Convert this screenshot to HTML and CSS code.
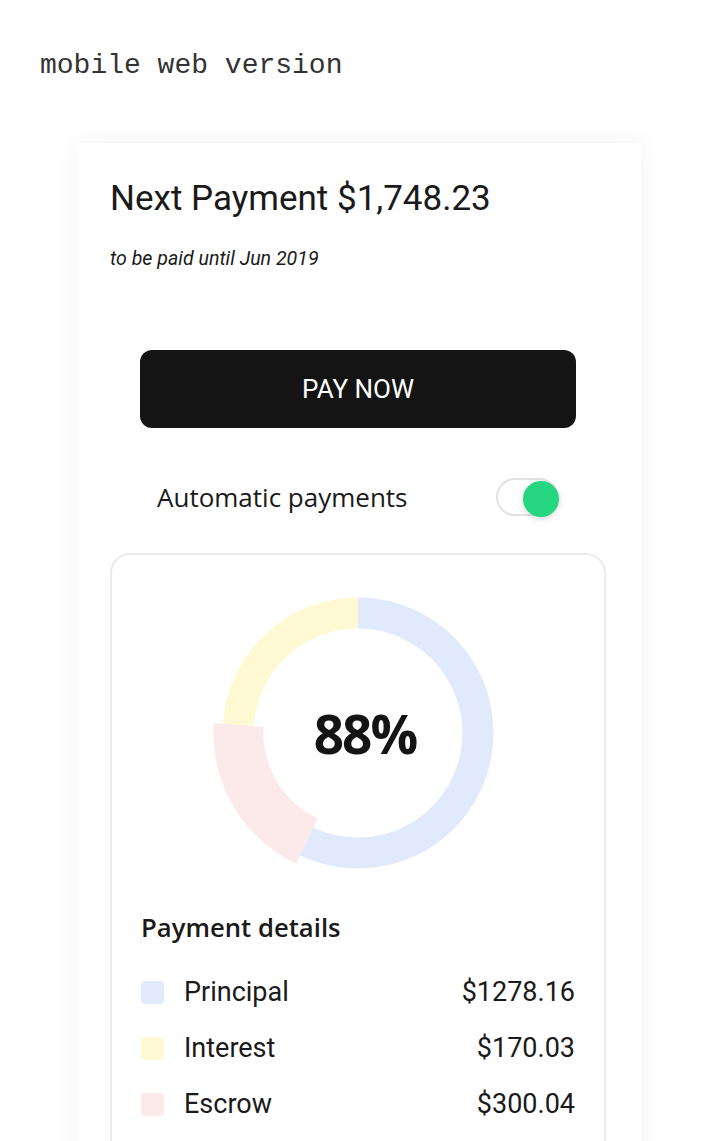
FILE: index.html
```html
<html>
<head>
<title>Next Payment</title>
<link rel="stylesheet" href="styles.css">
</head>
<body>
<div class="page-label">mobile web version</div>

<div class="phone">

  <h1 class="next-payment">Next Payment $1,748.23</h1>
  <p class="due-date">to be paid until Jun 2019</p>

  <button type="button" class="pay-now">PAY NOW</button>

  <div class="auto-pay">
    <span>Automatic payments</span>
    <span class="toggle"><span class="knob"></span></span>
  </div>

  <div class="summary">
    <div class="chart">
      <svg width="300" height="300" viewBox="-150 -150 300 300">
        <path d="M 0 -120 A 120 120 0 1 1 -51.29 108.49" fill="none" stroke="#e1e9fc" stroke-width="31" />
        <path d="M -119.72 -8.16 A 120 120 0 0 1 0 -120" fill="none" stroke="#fef9d3" stroke-width="31" />
        <path d="M -51.07 108.04 A 119.5 119.5 0 0 1 -119.22 -8.13" fill="none" stroke="#fce9e9" stroke-width="50" />
      </svg>
      <div class="percent">88%</div>
    </div>

    <h2 class="details-title">Payment details</h2>

    <div class="details-list">
      <div class="row">
        <span class="swatch principal"></span>
        <span class="label">Principal</span>
        <span class="amount">$1278.16</span>
      </div>
      <div class="row">
        <span class="swatch interest"></span>
        <span class="label">Interest</span>
        <span class="amount">$170.03</span>
      </div>
      <div class="row">
        <span class="swatch escrow"></span>
        <span class="label">Escrow</span>
        <span class="amount">$300.04</span>
      </div>
    </div>
  </div>

</div>
</body>
</html>
```

FILE: styles.css
```css
body {
  margin: 0;
  padding: 50px 0 0 40px;
  background: #fff;
  font-family: Roboto, "Liberation Sans", sans-serif;
  color: #1a1a1a;
}

.page-label {
  font-family: "Liberation Mono", monospace;
  font-size: 28px;
  line-height: 32px;
  color: #333;
}

.phone {
  margin: 61px 0 0 37px;
  width: 531px;
  padding: 35px 0 0 33px;
  height: 1000px;
  box-shadow: 0 0 24px rgba(0, 0, 0, 0.05);
}

.next-payment {
  margin: 0;
  font-size: 35px;
  line-height: 42px;
  font-weight: 400;
}

.due-date {
  margin: 28px 0 0 0;
  font-size: 19.6px;
  line-height: 22px;
  font-style: italic;
}

.pay-now {
  display: block;
  margin: 80px 0 0 30px;
  width: 436px;
  height: 78px;
  border: none;
  border-radius: 12px;
  background-color: #141414;
  color: #fff;
  font-family: Roboto, "Liberation Sans", sans-serif;
  font-size: 26px;
  cursor: pointer;
}

.auto-pay {
  display: flex;
  justify-content: space-between;
  align-items: center;
  margin: 50px 0 0 47px;
  width: 401px;
  height: 38px;
  font-family: "Open Sans", sans-serif;
  font-size: 26px;
}

.toggle {
  position: relative;
  width: 58px;
  height: 34px;
  border: 2px solid #e2e2e2;
  border-radius: 19px;
  background: #fff;
}

.knob {
  position: absolute;
  top: 1px;
  right: -3px;
  width: 36px;
  height: 36px;
  border-radius: 50%;
  background-color: #26d681;
  box-shadow: 0 2px 6px rgba(0, 0, 0, 0.15);
}

.summary {
  margin-top: 37px;
  width: 492px;
  height: 700px;
  border: 2px solid #ebebeb;
  border-radius: 20px;
  padding-top: 28px;
}

.chart {
  position: relative;
  width: 300px;
  height: 300px;
  margin: 0 auto;
}

.chart svg {
  display: block;
}

.percent {
  position: absolute;
  top: 0;
  left: 0;
  width: 100%;
  height: 100%;
  display: flex;
  align-items: center;
  justify-content: center;
  padding-left: 14px;
  box-sizing: border-box;
  font-family: "Open Sans", sans-serif;
  font-weight: 700;
  font-size: 53px;
  letter-spacing: -2px;
  color: #141414;
}

.details-title {
  margin: 30px 0 0 29px;
  font-family: "Open Sans", sans-serif;
  font-size: 25.7px;
  line-height: 30px;
  font-weight: 600;
}

.details-list {
  margin-top: 21px;
}

.row {
  display: flex;
  align-items: center;
  height: 56px;
  padding: 0 29px;
  font-size: 27px;
}

.swatch {
  width: 23px;
  height: 23px;
  border-radius: 4px;
  margin-right: 20px;
}

.principal { background-color: #e1e9fc; }
.interest { background-color: #fef9d3; }
.escrow { background-color: #fce9e9; }

.label {
  flex: 1;
}
```
